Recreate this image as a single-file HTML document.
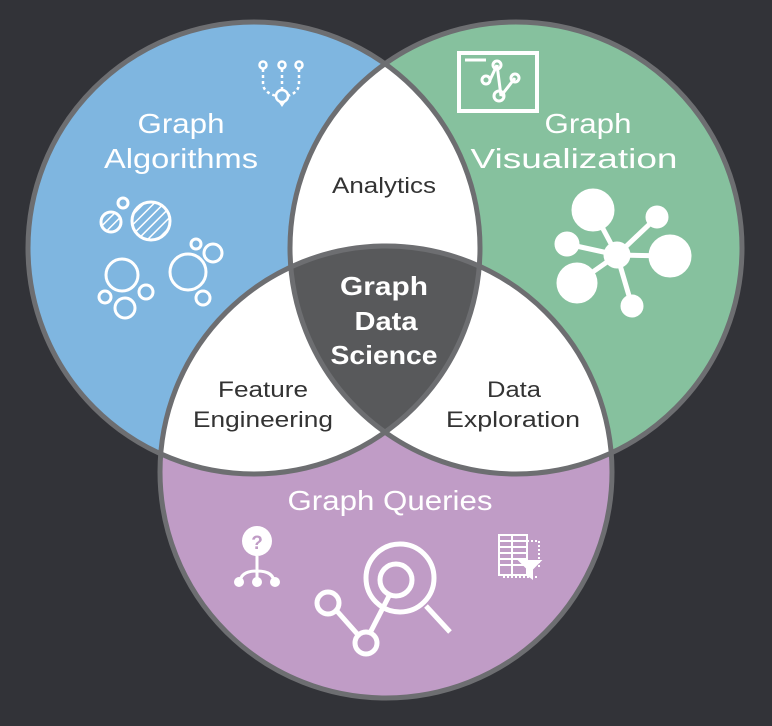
<!DOCTYPE html>
<html><head><meta charset="utf-8"><style>
html,body{margin:0;padding:0;background:#323338;}
svg{display:block}
text{font-family:"Liberation Sans",sans-serif;text-anchor:middle}
</style></head><body>
<svg width="772" height="726" viewBox="0 0 772 726">
<defs>
<clipPath id="cb"><circle cx="254" cy="248" r="226"/></clipPath>
<clipPath id="cg"><circle cx="516" cy="248" r="226"/></clipPath>
<pattern id="hatch" width="7" height="7" patternUnits="userSpaceOnUse" patternTransform="rotate(45)"><rect width="7" height="7" fill="none"/><line x1="0" y1="0" x2="0" y2="7" stroke="#fff" stroke-width="3"/></pattern>
</defs>
<rect width="772" height="726" fill="#323338"/>
<circle cx="254" cy="248" r="226" fill="#7fb6e0"/>
<circle cx="516" cy="248" r="226" fill="#86c19e"/>
<circle cx="386" cy="472" r="226" fill="#c09cc6"/>
<g clip-path="url(#cb)"><circle cx="516" cy="248" r="226" fill="#fff"/><circle cx="386" cy="472" r="226" fill="#fff"/></g>
<g clip-path="url(#cg)"><circle cx="386" cy="472" r="226" fill="#fff"/></g>
<g clip-path="url(#cb)"><g clip-path="url(#cg)"><circle cx="386" cy="472" r="226" fill="#58595b"/></g></g>
<g fill="none" stroke="#6d6e71" stroke-width="5">
<circle cx="254" cy="248" r="226"/><circle cx="516" cy="248" r="226"/><circle cx="386" cy="472" r="226"/>
</g>
<g fill="#fff" font-size="28" lengthAdjust="spacingAndGlyphs">
<text x="181" y="133" textLength="87" lengthAdjust="spacingAndGlyphs">Graph</text>
<text x="181" y="168" textLength="154" lengthAdjust="spacingAndGlyphs">Algorithms</text>
<text x="588" y="133" textLength="87" lengthAdjust="spacingAndGlyphs">Graph</text>
<text x="574" y="168" textLength="207" lengthAdjust="spacingAndGlyphs">Visualization</text>
<text x="390" y="510" textLength="205" lengthAdjust="spacingAndGlyphs">Graph Queries</text>
<text font-weight="bold" font-size="26" x="384" y="295" textLength="88" lengthAdjust="spacingAndGlyphs">Graph</text>
<text font-weight="bold" font-size="26" x="386" y="330" textLength="63" lengthAdjust="spacingAndGlyphs">Data</text>
<text font-weight="bold" font-size="26" x="384" y="364" textLength="107" lengthAdjust="spacingAndGlyphs">Science</text>
</g>
<g fill="#333" font-size="22">
<text x="384" y="193" textLength="104" lengthAdjust="spacingAndGlyphs">Analytics</text>
<text x="263" y="397" textLength="90" lengthAdjust="spacingAndGlyphs">Feature</text>
<text x="263" y="427" textLength="140" lengthAdjust="spacingAndGlyphs">Engineering</text>
<text x="514" y="397" textLength="54" lengthAdjust="spacingAndGlyphs">Data</text>
<text x="513" y="427" textLength="134" lengthAdjust="spacingAndGlyphs">Exploration</text>
</g>
<!-- algorithms icons -->
<g fill="none" stroke="#fff" stroke-width="2.5">
<circle cx="263" cy="65" r="3.5"/><circle cx="282" cy="65" r="3.5"/><circle cx="299" cy="65" r="3.5"/>
<path d="M263 69v14q0 10 14 13M282 69v21M299 69v14q0 10-12 13" stroke-dasharray="3 3"/>
<circle cx="282" cy="96" r="6"/>
</g>
<path d="M278 101l4 6 4-6z" fill="#fff"/>
<g fill="none" stroke="#fff" stroke-width="3">
<circle cx="123" cy="203" r="5"/>
<circle cx="111" cy="222" r="10" fill="url(#hatch)"/>
<circle cx="151" cy="221" r="19" fill="url(#hatch)"/>
<circle cx="122" cy="275" r="16"/>
<circle cx="105" cy="297" r="6"/><circle cx="125" cy="308" r="10"/><circle cx="146" cy="292" r="7"/>
<circle cx="188" cy="272" r="18"/><circle cx="196" cy="244" r="5"/><circle cx="213" cy="253" r="9"/><circle cx="203" cy="298" r="7"/>
</g>
<!-- visualization icons -->
<g fill="none" stroke="#fff" stroke-width="4">
<rect x="459" y="53" width="78" height="58"/>
</g>
<g stroke="#fff" stroke-width="3" fill="none">
<line x1="465" y1="60" x2="486" y2="60"/>
<path d="M497 65L490 80M497 65L501 96M501 96L515 78"/>
<circle cx="497" cy="65" r="4"/><circle cx="486" cy="80" r="4"/><circle cx="515" cy="78" r="4"/><circle cx="499" cy="96" r="5"/>
</g>
<g stroke="#fff" stroke-width="5" fill="#fff">
<path d="M617 255L593 210M617 255L657 217M617 255L567 244M617 255L670 256M617 255L577 283M617 255L632 306"/>
<circle cx="593" cy="210" r="19"/><circle cx="657" cy="217" r="9"/><circle cx="567" cy="244" r="10"/>
<circle cx="670" cy="256" r="19"/><circle cx="577" cy="283" r="18"/><circle cx="632" cy="306" r="9"/>
<circle cx="617" cy="255" r="11"/>
</g>
<!-- queries icons -->
<circle cx="257" cy="541" r="15" fill="#fff"/>
<text x="257" y="549" font-size="19" font-weight="bold" fill="#c09cc6">?</text>
<g stroke="#fff" stroke-width="3" fill="none"><path d="M257 556v28M240 583q0-12 17-12t17 12"/></g>
<g fill="#fff"><circle cx="239" cy="582" r="5"/><circle cx="257" cy="582" r="5"/><circle cx="275" cy="582" r="5"/></g>
<g stroke="#fff" stroke-width="5" fill="none">
<circle cx="400" cy="578" r="34"/><circle cx="396" cy="580" r="16"/>
<line x1="426" y1="606" x2="450" y2="632"/>
<line x1="389" y1="596" x2="370" y2="633"/><line x1="336" y1="610" x2="360" y2="637"/>
<circle cx="328" cy="603" r="11"/><circle cx="366" cy="643" r="11"/>
</g>
<g stroke="#fff" stroke-width="2" fill="none">
<rect x="499" y="535" width="28" height="40"/>
<path d="M499 541h28M499 547h28M499 553h28M499 559h28M499 565h28M512 535v40"/>
<path d="M527 541h12v28M503 577h34" stroke-dasharray="2 2"/>
<path d="M520 561h20l-8 8v9l-4-3v-6z" fill="#fff"/>
</g>
</svg>
</body></html>
